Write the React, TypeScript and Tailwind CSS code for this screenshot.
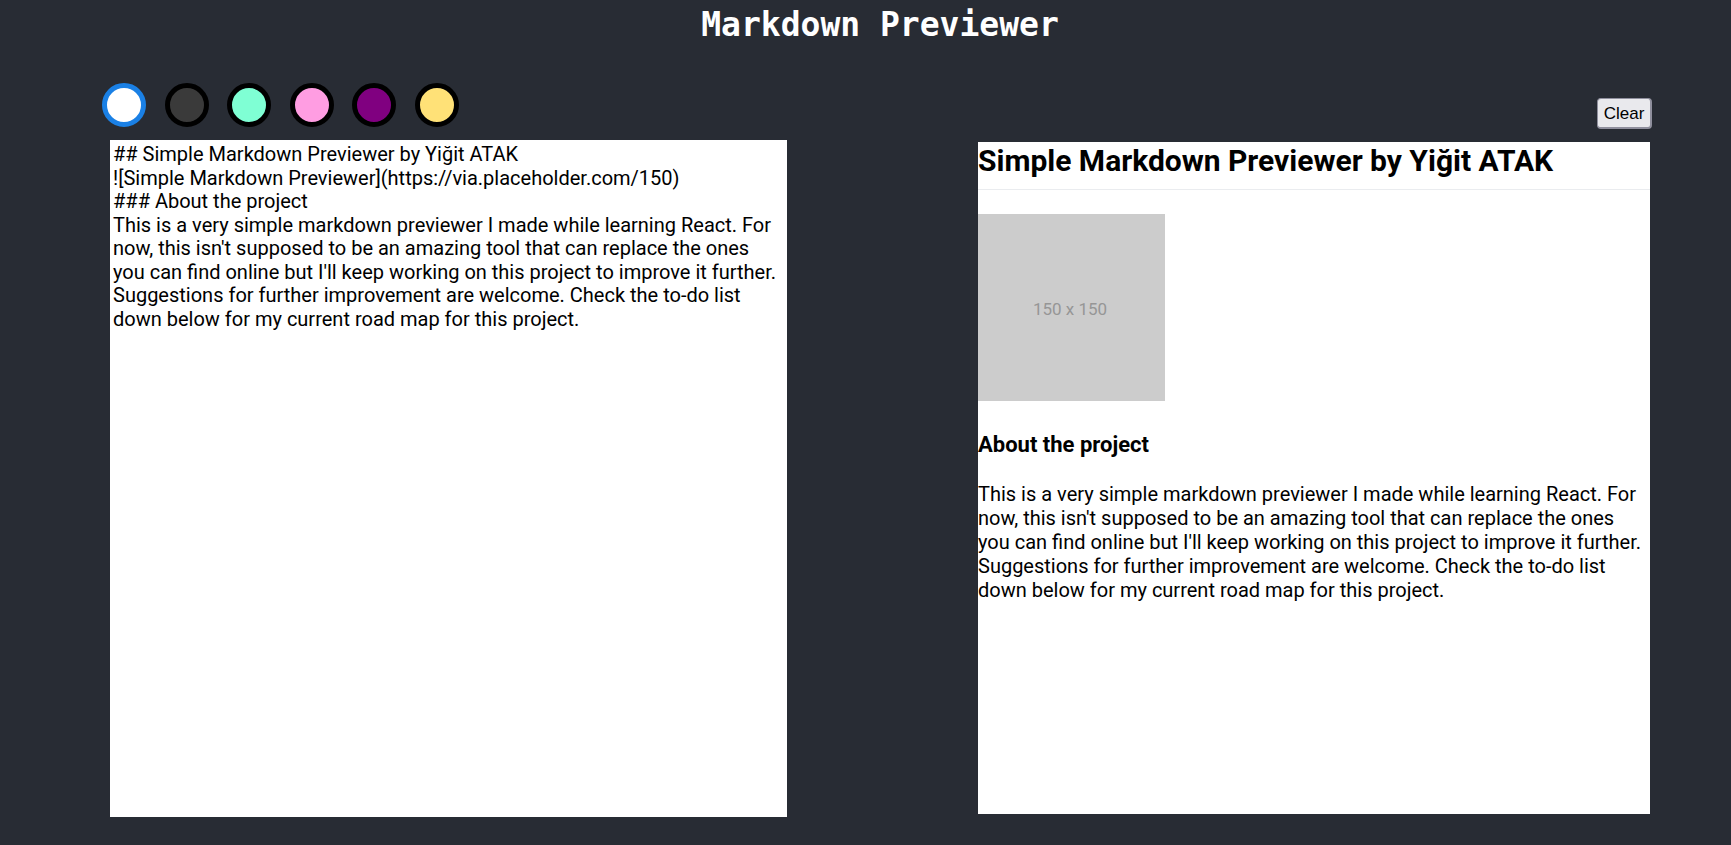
import { useState } from "react";

const themes = [
  { name: "white", bg: "bg-white" },
  { name: "dark", bg: "bg-[#3a3a3a]" },
  { name: "aqua", bg: "bg-[#7fffd4]" },
  { name: "pink", bg: "bg-[#ff9de2]" },
  { name: "purple", bg: "bg-[#800080]" },
  { name: "yellow", bg: "bg-[#ffe177]" },
];

const initialText = `## Simple Markdown Previewer by Yiğit ATAK
![Simple Markdown Previewer](https://via.placeholder.com/150)
### About the project
This is a very simple markdown previewer I made while learning React. For now, this isn't supposed to be an amazing tool that can replace the ones you can find online but I'll keep working on this project to improve it further. Suggestions for further improvement are welcome. Check the to-do list down below for my current road map for this project.`;

const App = () => {
  const [text, setText] = useState(initialText);
  const [selected, setSelected] = useState("white");

  return (
    <div className="min-h-screen bg-[#282c34] font-['Roboto',sans-serif]">
      {/* Title */}
      <h1 className="pt-[6px] pl-[29px] text-center font-['DejaVu_Sans_Mono',monospace] text-[33px] leading-[38.4px] font-bold text-white">
        Markdown Previewer
      </h1>

      <div className="flex pl-[110px]">
        {/* Editor column */}
        <div className="flex w-[677px] flex-col">
          <div className="mt-[38.6px] -ml-[8px] flex gap-[18.6px]">
            {themes.map((t) => (
              <button
                key={t.name}
                onClick={() => setSelected(t.name)}
                className={`h-[44px] w-[44px] rounded-full border-[5px] ${t.bg} ${
                  selected === t.name ? "border-[#1a80e5]" : "border-black"
                }`}
              />
            ))}
          </div>
          <textarea
            value={text}
            onChange={(e) => setText(e.target.value)}
            className="mt-[13px] h-[677px] w-[677px] resize-none bg-white p-[3px] text-[20px] leading-[23.5px] text-black outline-none"
          />
        </div>

        {/* Preview column */}
        <div className="ml-[191px] flex w-[672px] flex-col">
          <div className="flex justify-end">
            <button
              onClick={() => setText("")}
              className="mt-[53.6px] -mr-[2px] h-[31px] w-[55px] rounded-[4px] border border-[#8f8f9d] border-b-[2px] border-r-[2px] bg-[#e9e9ed] font-['Liberation_Sans',sans-serif] text-[17px] leading-none text-black"
            >
              Clear
            </button>
          </div>
          <div className="mt-[13px] h-[672px] w-[672px] bg-white text-black">
            <h2 className="border-b border-[#eaecef] pb-[9px] text-[30px] leading-[1.25] font-bold">
              Simple Markdown Previewer by Yiğit ATAK
            </h2>
            <div className="mt-[24px] flex h-[187px] w-[187px] items-center justify-center bg-[#cccccc] pt-[6px] pr-[3px] text-[17px] text-[#969696]">
              150 x 150
            </div>
            <h3 className="mt-[31.5px] text-[22px] leading-[26px] font-bold">About the project</h3>
            <p className="mt-[24.4px] text-[20px] leading-[24px]">
              This is a very simple markdown previewer I made while learning React. For now, this isn't supposed
              to be an amazing tool that can replace the ones you can find online but I'll keep working on this
              project to improve it further. Suggestions for further improvement are welcome. Check the to-do list
              down below for my current road map for this project.
            </p>
          </div>
        </div>
      </div>
    </div>
  );
};

export default App;
